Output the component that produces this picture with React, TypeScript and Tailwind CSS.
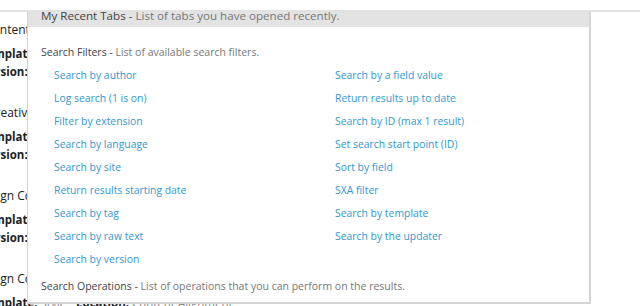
import React from "react";

const filtersLeft = [
  "Search by author",
  "Log search (1 is on)",
  "Filter by extension",
  "Search by language",
  "Search by site",
  "Return results starting date",
  "Search by tag",
  "Search by raw text",
  "Search by version",
];

const filtersRight = [
  "Search by a field value",
  "Return results up to date",
  "Search by ID (max 1 result)",
  "Set search start point (ID)",
  "Sort by field",
  "SXA filter",
  "Search by template",
  "Search by the updater",
];

const items = [
  { title: "Content", shift: "ml-[-15px]" },
  { title: "Creative", shift: "ml-[-12px]" },
  { title: "Design Content", shift: "ml-[-24px]" },
  { title: "Design Content", shift: "ml-[-24px]" },
];

const App = () => {
  return (
    <div
      className="relative w-[640px] h-[306px] overflow-hidden bg-white"
      style={{ fontFamily: '"Open Sans", sans-serif' }}
    >
      {/* page header strip */}
      <div className="relative z-10 h-[12px] bg-white border-b-2 border-[#e2e2e2]" />

      {/* page content behind the popup */}
      <div className="pt-[9px]">
        {items.map((item, index) => (
          <div key={index} className="h-[83px]">
            <div
              className={`${item.shift} text-[12px] leading-[18px] text-[#222] whitespace-nowrap`}
            >
              {item.title}
            </div>
            <div className="ml-[-20px] mt-[6px] text-[11.5px] leading-[18px] whitespace-nowrap">
              <span className="font-bold text-[#222]">Template:</span>{" "}
              <span className="text-[#888]">Style</span>
              <span className="ml-[10px] font-bold text-[#222]">Location:</span>{" "}
              <span className="text-[#888]">Content Alignment</span>
            </div>
            <div className="ml-[-19px] text-[11.5px] leading-[18px] font-bold text-[#222] whitespace-nowrap">
              Version:
            </div>
          </div>
        ))}
      </div>

      {/* search help popup */}
      <div className="absolute left-[27px] top-0 w-[564px] h-[304px] bg-white border-l border-r-2 border-b-2 border-[#d4d4d4]">
        <div className="h-[27px] bg-[#e3e3e3] pl-[13px] pt-[8px] text-[11.6px] leading-[16px] whitespace-nowrap">
          <span className="text-[#444]">My Recent Tabs - </span>
          <span className="text-[#777]">List of tabs you have opened recently.</span>
        </div>

        <div className="mt-[17px] pl-[13px] text-[10.5px] leading-[16px] whitespace-nowrap">
          <span className="text-[#444]">Search Filters - </span>
          <span className="text-[#777]">List of available search filters.</span>
        </div>

        <div className="mt-[4px] flex text-[10.4px] leading-[23px] text-[#3398cc]">
          <div className="w-[307px] pl-[26px] flex flex-col">
            {filtersLeft.map((f) => (
              <div key={f} className="whitespace-nowrap">
                {f}
              </div>
            ))}
          </div>
          <div className="flex flex-col">
            {filtersRight.map((f) => (
              <div key={f} className="whitespace-nowrap">
                {f}
              </div>
            ))}
          </div>
        </div>

        <div className="mt-[7px] pl-[13px] text-[10.5px] leading-[16px] whitespace-nowrap">
          <span className="text-[#444]">Search Operations - </span>
          <span className="text-[#777]">
            List of operations that you can perform on the results.
          </span>
        </div>
      </div>
    </div>
  );
};

export default App;
